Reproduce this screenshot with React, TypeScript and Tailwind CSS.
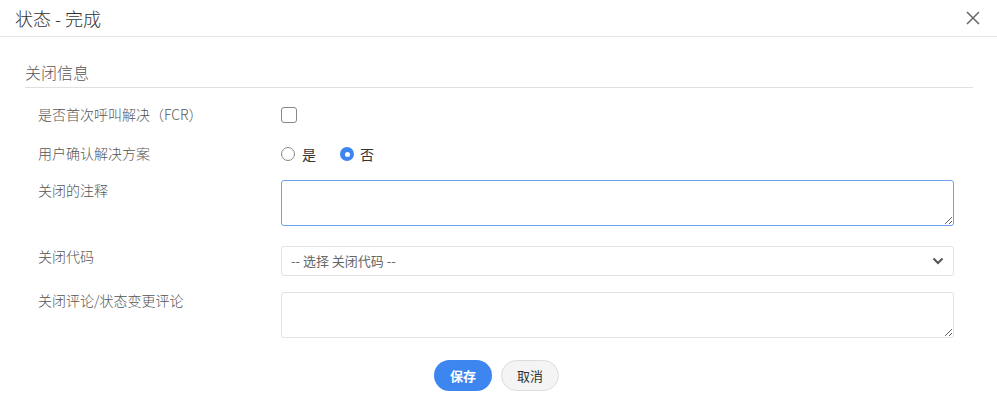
import React from "react";

export default function App() {
  const font = { fontFamily: '"Noto Sans CJK SC", "Noto Sans", sans-serif' };
  return (
    <div className="w-[997px] h-[409px] bg-white text-[#333] overflow-hidden" style={font}>
      <div className="h-[37px] border-b border-[#e5e5e5] flex items-center justify-between pl-[15px] pr-[17px]">
        <div className="text-[18px] text-[#333] leading-none font-light">状态 - 完成</div>
        <svg width="14" height="14" viewBox="0 0 14 14" className="text-[#666]">
          <path d="M1 1L13 13M13 1L1 13" stroke="currentColor" strokeWidth="1.5" fill="none" />
        </svg>
      </div>
      <div className="pl-[25px] pr-[24px]">
        <div className="h-[51px] border-b border-[#e0e0e0] flex items-end pb-[5px]">
          <span className="text-[16px] text-[#555] leading-[20px] font-light">关闭信息</span>
        </div>
        <div className="pl-[13px] pr-[19px] text-[14px] text-[#555] font-light">
          <div className="flex h-[28px] mt-[13px] items-center">
            <div className="w-[243px] -mt-[2px]">是否首次呼叫解决（FCR）</div>
            <div className="w-[16px] h-[16px] border border-[#888] rounded-[3px] bg-white" />
          </div>
          <div className="flex h-[28px] mt-[11px] items-center">
            <div className="w-[243px] -mt-[2px]">用户确认解决方案</div>
            <div className="flex items-center font-normal">
              <div className="w-[14px] h-[14px] rounded-full border border-[#888] bg-white" />
              <span className="ml-[7px] text-[#333] text-[14px]">是</span>
              <div className="ml-[24px] w-[14px] h-[14px] rounded-full bg-[#3d86f0] flex items-center justify-center">
                <div className="w-[5px] h-[5px] rounded-full bg-white" />
              </div>
              <span className="ml-[6px] text-[#333] text-[14px]">否</span>
            </div>
          </div>
          <div className="flex mt-[12px]">
            <div className="w-[243px] leading-[20px]">关闭的注释</div>
            <textarea className="flex-1 h-[46px] border border-[#6b9ff0] rounded-[3px] outline-none bg-white" />
          </div>
          <div className="flex mt-[20px]">
            <div className="w-[243px] leading-[20px]">关闭代码</div>
            <div className="flex-1 h-[30px] border border-[#e3e3e3] rounded-[3px] flex items-center justify-between pl-[9px] pr-[9px] text-[#666] font-normal">
              <span className="text-[13px]">-- 选择 关闭代码 --</span>
              <svg width="12" height="8" viewBox="0 0 12 8">
                <path d="M1.5 1.5L6 6L10.5 1.5" stroke="#555" strokeWidth="2" fill="none" />
              </svg>
            </div>
          </div>
          <div className="flex mt-[16px]">
            <div className="w-[243px] leading-[20px] -mt-[2px]">关闭评论/状态变更评论</div>
            <textarea className="flex-1 h-[46px] border border-[#e3e3e3] rounded-[3px] outline-none bg-white" />
          </div>
        </div>
        <div className="flex justify-center gap-[9px] mt-[22px] pr-[5px]">
          <button className="w-[58px] h-[31px] rounded-full bg-[#3d86f0] text-white text-[13px] font-bold">保存</button>
          <button className="w-[58px] h-[31px] rounded-full bg-[#f4f4f4] border border-[#dcdcdc] text-[#333] text-[13px]">取消</button>
        </div>
      </div>
    </div>
  );
}
